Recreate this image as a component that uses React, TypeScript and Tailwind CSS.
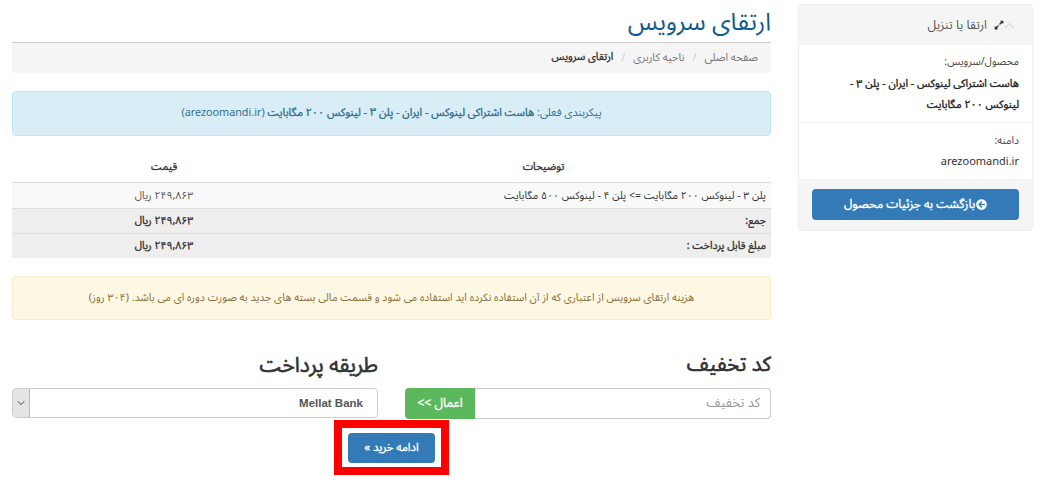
import { FaArrowCircleLeft, FaExpandAlt, FaChevronUp } from 'react-icons/fa';
import { ChevronDown } from 'lucide-react';

const fontStack = "font-['Noto_Sans_Arabic','DejaVu_Sans','Noto_Sans',sans-serif]";
const faux = '[-webkit-text-stroke:0.35px_currentColor]';

function Sidebar() {
  return (
    <aside className="w-[235px] shrink-0 mt-1 self-start rounded border border-[#eeeeee] overflow-hidden text-[10.5px] text-[#333]">
      <div className="h-[40px] bg-[#f5f5f5] flex items-center pr-[17px] text-[#555] text-[12.4px]">
        <FaChevronUp className="text-[#e2e2e2] text-[11px] shrink-0" />
        <FaExpandAlt className="text-[#333] text-[10px] shrink-0 ml-[7px]" />
        <span>ارتقا یا تنزیل</span>
      </div>
      <div className="pr-[13px] pl-[40px] pt-[6px] leading-[21px] h-[78px] border-b border-[#f2f2f2]">
        <div className="text-[#444] leading-[22px]">محصول/سرویس:</div>
        <div className={`text-[#222] text-[10.7px] ${faux}`}>هاست اشتراکی لینوکس - ایران - پلن ۳ - لینوکس ۲۰۰ مگابایت</div>
      </div>
      <div className="px-[13px] pt-[8px] h-[56px]">
        <div className="text-[#444] leading-[20px]">دامنه:</div>
        <div className="text-[#333] text-[11px] leading-[20px] mt-[1px]">arezoomandi.ir</div>
      </div>
      <div className="bg-[#f5f5f5] px-[13px] pt-[10px] pb-[10px]">
        <button className={`w-full h-[31px] bg-[#337ab7] rounded text-white text-[12px] flex items-center justify-center gap-[1px] ${faux}`}>
          <FaArrowCircleLeft className="text-[11px]" />
          <span>بازگشت به جزئیات محصول</span>
        </button>
      </div>
    </aside>
  );
}

function Main() {
  return (
    <main className="w-[759px] shrink-0 text-[10.5px] text-[#333]">
      <h1 className="text-[#0f5b8c] text-[24.4px] leading-[39px] pt-[3px] border-b border-[#cccccc]">ارتقای سرویس</h1>
      <nav className="h-[30px] bg-[#f5f5f5] rounded-b flex items-center pr-[13px] gap-[8px] text-[#777] text-[10.8px]">
        <span>صفحه اصلی</span>
        <span className="text-[#ccc]">/</span>
        <span>ناحیه کاربری</span>
        <span className="text-[#ccc]">/</span>
        <span className={`text-[#333] text-[10.5px] ${faux}`}>ارتقای سرویس</span>
      </nav>

      <div className="mt-[18px] h-[45px] bg-[#d9edf7] border border-[#bce8f1] rounded flex items-center justify-center text-[#31708f] text-[10.8px]">
        <span>
          پیکربندی فعلی: <span className={faux}>هاست اشتراکی لینوکس - ایران - پلن ۳ - لینوکس ۲۰۰ مگابایت</span> (arezoomandi.ir)
        </span>
      </div>

      <table className="w-full mt-[14px] border-collapse">
        <thead>
          <tr className="h-[32px] border-b border-[#dddddd]">
            <th className={`pt-[5px] font-normal text-[#333] ${faux}`}>توضیحات</th>
            <th className={`pt-[5px] w-[304px] font-normal text-[#333] ${faux}`}>قیمت</th>
          </tr>
        </thead>
        <tbody>
          <tr className="h-[26px] bg-[#f9f9f9] border-b border-[#dddddd]">
            <td className="pr-[5px] pt-[3px]">پلن ۳ - لینوکس ۲۰۰ مگابایت =&gt; پلن ۴ - لینوکس ۵۰۰ مگابایت</td>
            <td className="pt-[3px] text-center text-[#555]">۲۴۹,۸۶۳ ریال</td>
          </tr>
          <tr className={`h-[25px] bg-[#eeeeee] border-b border-[#dddddd] ${faux}`}>
            <td className="pr-[5px] pt-[2px]">جمع:</td>
            <td className="pt-[2px] text-center">۲۴۹,۸۶۳ ریال</td>
          </tr>
          <tr className={`h-[25px] bg-[#eeeeee] ${faux}`}>
            <td className="pr-[5px] pt-[2px]">مبلغ قابل پرداخت :</td>
            <td className="pt-[2px] text-center">۲۴۹,۸۶۳ ریال</td>
          </tr>
        </tbody>
      </table>

      <div className="mt-[18px] h-[44px] bg-[#fcf8e3] border border-[#faebcc] rounded flex items-center justify-center text-[#8a6d3b] text-[10.7px]">
        هزینه ارتقای سرویس از اعتباری که از آن استفاده نکرده اید استفاده می شود و قسمت مالی بسته های جدید به صورت دوره ای می باشد. (۳۰۴ روز)
      </div>

      <div className="mt-[28px] flex gap-[27px]">
        <section className="w-[366px]">
          <h2 className="text-[20.5px] leading-[34px] mb-[6px] text-[#333] [-webkit-text-stroke:0.6px_currentColor]">کد تخفیف</h2>
          <div className="flex h-[31px]">
            <input
              placeholder="کد تخفیف"
              className="flex-1 min-w-0 border border-[#cccccc] border-l-0 rounded-r px-[10px] text-[13px] placeholder:text-[#999] bg-white"
            />
            <button className={`w-[70px] bg-[#5cb85c] rounded-l text-white text-[12.3px] ${faux}`}>اعمال &gt;&gt;</button>
          </div>
        </section>
        <section className="flex-1">
          <h2 className="text-[21px] leading-[34px] mb-[6px] text-[#333] [-webkit-text-stroke:0.6px_currentColor]">طریقه پرداخت</h2>
          <div className="flex items-center justify-between h-[30px] border border-[#cccccc] rounded bg-white pr-[14px]">
            <span className="font-['Liberation_Sans',sans-serif] font-bold text-[11.5px] text-[#555] pt-[1px]" dir="ltr">Mellat Bank</span>
            <span className="w-[17px] h-full bg-[#e4e4e4] border-r border-[#bbbbbb] rounded-l flex items-center justify-center">
              <ChevronDown size={12} className="text-[#444]" />
            </span>
          </div>
        </section>
      </div>

      <div className="flex justify-center mt-[1px]">
        <div className="w-[115px] h-[55px] border-[8px] border-[#ff0000] flex items-center justify-center">
          <button className={`w-[87px] h-[30px] bg-[#337ab7] rounded text-white text-[11.4px] ${faux}`}>ادامه خرید »</button>
        </div>
      </div>
    </main>
  );
}

export default function App() {
  return (
    <div dir="rtl" className={`w-[1038px] h-[488px] bg-white overflow-hidden flex pr-[5px] gap-[27px] ${fontStack}`}>
      <Sidebar />
      <Main />
    </div>
  );
}
